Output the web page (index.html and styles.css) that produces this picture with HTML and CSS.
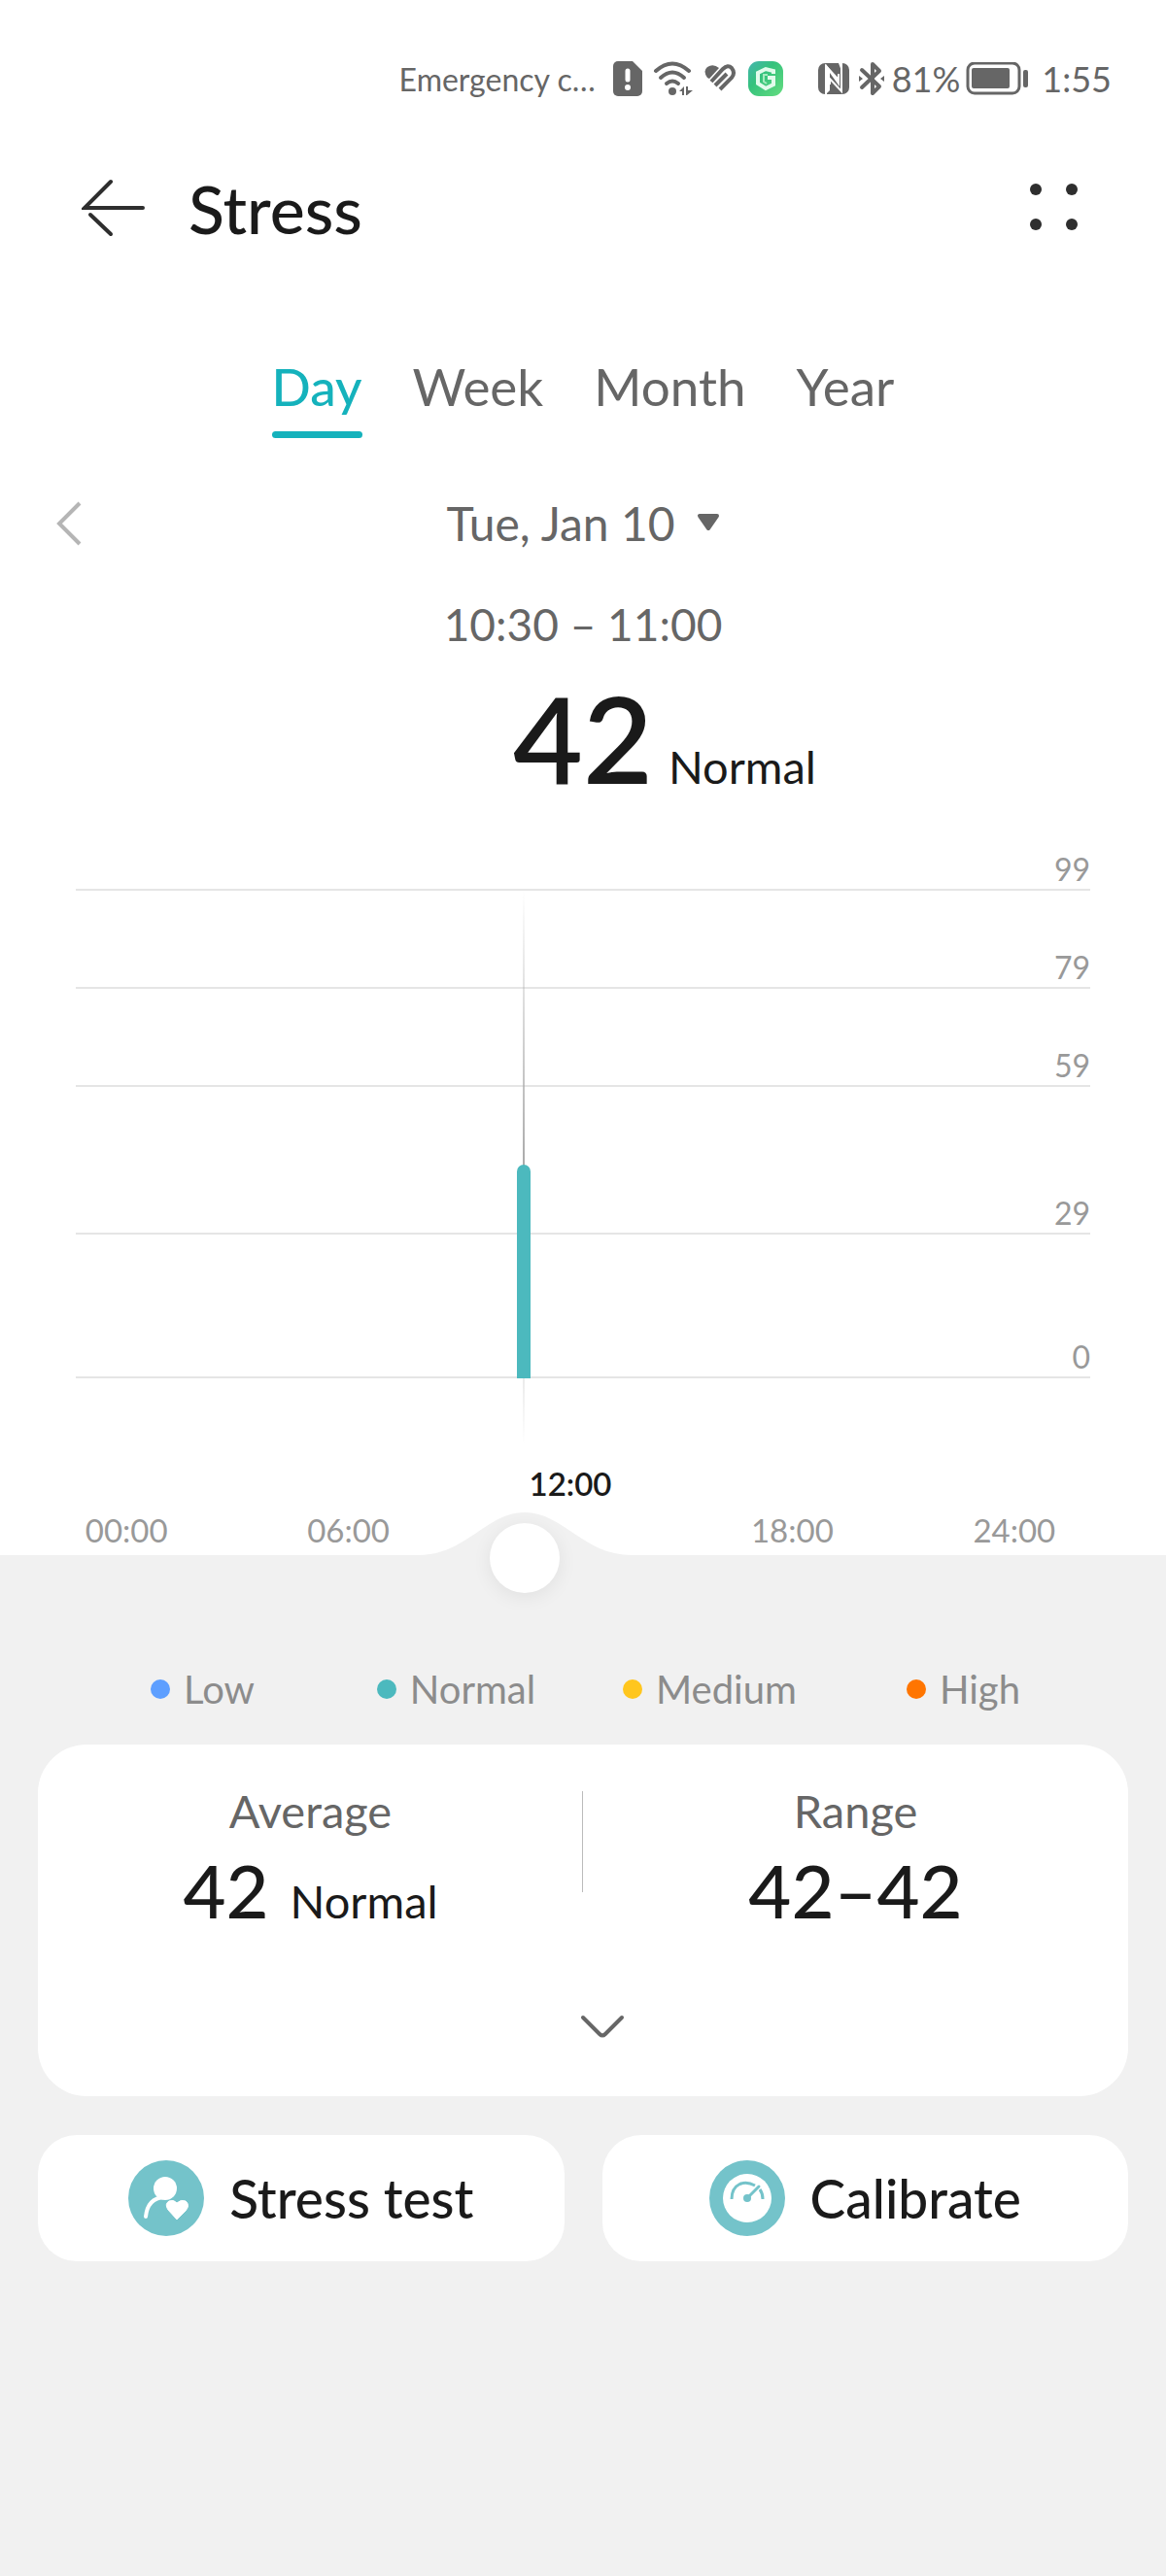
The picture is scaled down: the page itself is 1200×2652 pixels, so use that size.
FILE: index.html
```html
<!DOCTYPE html>
<html lang="en">

<head>
    <meta charset="utf-8">
    <meta name="viewport" content="width=device-width, initial-scale=1.0">
    <title>Stress</title>
    <link rel="stylesheet" href="styles.css">
</head>

<body>

    <div class="top">

        <!-- status bar -->
        <div class="status">
            <span class="carrier">Emergency c…</span>
            <svg class="sim" width="30" height="36" viewBox="0 0 30 36">
                <path d="M5 0h15l10 10v21a5 5 0 0 1-5 5H5a5 5 0 0 1-5-5V5a5 5 0 0 1 5-5z" fill="#666" />
                <path d="M15 10v9" stroke="#fff" stroke-width="5" stroke-linecap="round" />
                <circle cx="15" cy="27" r="3" fill="#fff" />
            </svg>
            <svg class="wifi" width="42" height="36" viewBox="0 0 42 36">
                <g fill="none" stroke="#666" stroke-width="4" stroke-linecap="round">
                    <path d="M3 10Q20-5 37 10" />
                    <path d="M8 17Q20 6 32 17" />
                    <path d="M14 23Q20 18 26 23" />
                </g>
                <circle cx="20" cy="31" r="4" fill="#666" />
                <path d="M27 31l5-5v9h-2v-4zM34 26h2v4h5l-6 5h-1z" fill="#666" />
            </svg>
            <svg class="heart" width="34" height="30" viewBox="0 0 34 30">
                <g fill="none" stroke="#666" stroke-width="4">
                    <path d="M7 18L19 5Q24 0 28 4Q32 9 28 14L16 26" />
                    <path d="M11 22L23 10" />
                </g>
                <path d="M3 14Q-2 7 3 3Q9-1 15 4L5 15z" fill="#666" />
            </svg>
            <svg class="app" width="36" height="36" viewBox="0 0 36 36">
                <defs>
                    <linearGradient id="green" x1="0" y1="0" x2="1" y2="1">
                        <stop offset="0" stop-color="#45b5b0" />
                        <stop offset="0.4" stop-color="#35c27c" />
                        <stop offset="1" stop-color="#65dd80" />
                    </linearGradient>
                </defs>
                <rect width="36" height="36" rx="11" fill="url(#green)" />
                <path d="M26 13V10L18 8L10 12V23L18 28L26 24V17H20" fill="none" stroke="#e2fbec" stroke-width="4" />
                <path d="M20 14h-4v7l3 2" fill="none" stroke="#a5ebc0" stroke-width="2" />
            </svg>
            <svg class="nfc" width="32" height="32" viewBox="0 0 32 32">
                <rect width="32" height="32" rx="7" fill="#666" />
                <path d="M8 32V3L21 17V11M24 0V29L12 16V22" fill="none" stroke="#fff" stroke-width="2" />
                <path d="M8 1L22 19V24L12 10V28L8 32zM21 0h3v8z" fill="#fff" />
            </svg>
            <svg class="bluetooth" width="26" height="36" viewBox="0 0 26 36">
                <path d="M3 9L21 26L14 33V3L21 10L3 27" fill="none" stroke="#666" stroke-width="4" stroke-linejoin="round" stroke-linecap="round" />
                <path d="M0 15l4 3-4 3zM26 15l-4 3 4 3z" fill="#666" />
            </svg>
            <span class="clock">81%</span>
            <svg class="battery" width="64" height="34" viewBox="0 0 64 34">
                <rect x="2" y="1" width="53" height="31" rx="7" fill="none" stroke="#666" stroke-width="3" />
                <rect x="6" y="6" width="39" height="21" rx="2" fill="#666" />
                <rect x="59" y="8" width="5" height="18" rx="2" fill="#666" />
            </svg>
            <span class="clock">1:55</span>
        </div>

        <header class="header">
            <button class="icon-button" aria-label="Back">
                <svg width="66" height="60" viewBox="0 0 66 60" fill="none" stroke="#2e2e2e" stroke-width="4" stroke-linecap="round">
                    <path d="M30 3L3 30H63" />
                    <path d="M9 37L30 57" />
                </svg>
            </button>
            <h1>Stress</h1>
            <button class="icon-button" aria-label="More">
                <svg width="50" height="50" viewBox="0 0 50 50" fill="#2e2e2e">
                    <circle cx="6" cy="6" r="6" />
                    <circle cx="43" cy="6" r="6" />
                    <circle cx="6" cy="42" r="6" />
                    <circle cx="43" cy="42" r="6" />
                </svg>
            </button>
        </header>

        <nav class="tabs">
            <a class="tab active" href="#day">Day</a>
            <a class="tab" href="#week">Week</a>
            <a class="tab" href="#month">Month</a>
            <a class="tab" href="#year">Year</a>
        </nav>

        <div class="date-row">
            <button class="icon-button" aria-label="Previous day">
                <svg width="26" height="46" viewBox="0 0 26 46" fill="none" stroke="#b5b5b5" stroke-width="4">
                    <path d="M24 2L3 23L24 44" />
                </svg>
            </button>
            <button class="date">
                Tue, Jan 10
                <svg width="24" height="22" viewBox="0 0 24 22">
                    <path d="M3 3H21L12 16z" fill="#666" stroke="#666" stroke-width="4" stroke-linejoin="round" />
                </svg>
            </button>
        </div>

        <p class="time">10:30 – 11:00</p>
        <p class="reading"><strong>42</strong><span>Normal</span></p>

        <!-- chart: one grid band per level, heights follow the values -->
        <div class="chart">
            <div class="level top-level">99</div>
            <div class="level">79</div>
            <div class="level">59</div>
            <div class="level tall">29</div>
            <div class="level last">0</div>
            <div class="cursor"></div>
            <div class="bar"></div>
        </div>

        <div class="hours">
            <span>00:00</span>
            <span>06:00</span>
            <span class="current">12:00</span>
            <span>18:00</span>
            <span>24:00</span>
            <svg class="hump" width="220" height="45" viewBox="0 0 220 45">
                <path d="M0 45C50 45 70 1 110 1S170 45 220 45z" fill="#f1f1f1" />
            </svg>
            <button class="knob" aria-label="Selected time"></button>
        </div>
    </div>

    <main>
        <ul class="legend">
            <li><i class="dot low"></i>Low</li>
            <li><i class="dot normal"></i>Normal</li>
            <li><i class="dot medium"></i>Medium</li>
            <li><i class="dot high"></i>High</li>
        </ul>

        <section class="card">
            <div class="stats">
                <div class="stat">
                    <h2>Average</h2>
                    <p><strong>42</strong><span>Normal</span></p>
                </div>
                <div class="stat">
                    <h2>Range</h2>
                    <p><strong>42–42</strong></p>
                </div>
            </div>
            <button class="icon-button expand" aria-label="Show more">
                <svg width="46" height="26" viewBox="0 0 46 26" fill="none" stroke="#666" stroke-width="4" stroke-linecap="round" stroke-linejoin="round">
                    <path d="M3 3L20 20Q23 23 26 20L43 3" />
                </svg>
            </button>
        </section>

        <div class="actions">
            <button class="action">
                <svg width="78" height="78" viewBox="0 0 78 78">
                    <circle cx="39" cy="39" r="39" fill="#74c3ca" />
                    <circle cx="38" cy="29" r="12" fill="#fff" />
                    <path d="M18 58Q20 39 37 38" fill="none" stroke="#fff" stroke-width="4" stroke-linecap="round" />
                    <path d="M50 61L41 51Q37 45 42 42Q47 40 50 44Q54 40 59 42Q64 46 59 52z" fill="#fff" stroke="#fff" stroke-linejoin="round" />
                </svg>
                Stress test
            </button>
            <button class="action">
                <svg width="78" height="78" viewBox="0 0 78 78">
                    <circle cx="39" cy="39" r="39" fill="#74c3ca" />
                    <circle cx="39" cy="39" r="25" fill="#fff" />
                    <g fill="none" stroke="#74c3ca" stroke-width="3">
                        <path d="M23 40C23 24 36 20 47 26" />
                        <path d="M52 30Q55 34 55 40" />
                        <path d="M39 39L51 27" stroke-linecap="round" />
                    </g>
                    <circle cx="39" cy="39" r="4" fill="#74c3ca" />
                </svg>
                Calibrate
            </button>
        </div>
    </main>

</body>

</html>
```
FILE: styles.css
```css
* {
    box-sizing: border-box;
}

body {
    margin: 0;
    background-color: #f1f1f1;
    font-family: Lato, "Open Sans", sans-serif;
    font-size: 47px;
    color: #666;
}

h1,
h2,
p,
ul {
    margin: 0;
    padding: 0;
    font-weight: 400;
}

button {
    border: none;
    padding: 0;
    background: none;
    font: inherit;
    color: inherit;
}

svg {
    display: block;
    flex: none;
}

.top {
    background-color: #fff;
}

/* ---------- status bar ---------- */

.status {
    display: flex;
    justify-content: flex-end;
    align-items: center;
    height: 120px;
    padding: 42px 56px 0 0;
}

.carrier {
    font-size: 32px;
    margin-right: 18px;
}

.clock {
    font-size: 36px;
}

.sim,
.wifi,
.heart {
    margin-right: 11px;
}

.app {
    margin-right: 36px;
}

.nfc {
    margin-right: 10px;
}

.bluetooth {
    margin-right: 8px;
}

.battery {
    margin: 0 14px 0 6px;
}

/* ---------- header ---------- */

.header {
    display: flex;
    align-items: center;
    height: 188px;
    padding: 0 90px 0 84px;
}

.header h1 {
    flex: 1;
    margin-left: 44px;
    font-size: 68px;
    font-weight: 500;
    color: #1a1a1a;
}

.tabs {
    display: flex;
    justify-content: center;
    gap: 52px;
    padding-top: 56px;
}

.tab {
    height: 87px;
    font-size: 53px;
    line-height: 68px;
    color: #666;
    text-decoration: none;
}

.tab.active {
    color: #15b2bc;
    font-weight: 500;
}

.tab.active::after {
    content: "";
    display: block;
    height: 7px;
    margin-top: 12px;
    border-radius: 4px;
    background-color: #15b2bc;
}

/* ---------- selected day ---------- */

.date-row {
    display: grid;
    grid-template-columns: 1fr auto 1fr;
    align-items: center;
    padding: 58px 58px 0;
    line-height: 60px;
}

.date {
    display: flex;
    align-items: center;
    gap: 22px;
    font-size: 48px;
}

.time {
    padding-top: 44px;
    font-size: 46px;
    line-height: 60px;
    text-align: center;
}

.reading {
    display: flex;
    justify-content: center;
    align-items: baseline;
    gap: 16px;
    padding: 14px 0 0 168px;
    line-height: 60px;
    color: #1a1a1a;
}

.reading strong {
    font-size: 124px;
    font-weight: 600;
    line-height: 144px;
}

/* ---------- chart ---------- */

.chart {
    position: relative;
    margin: 0 78px;
    padding: 30px 0 68px;
    font-size: 32px;
    line-height: 40px;
    text-align: right;
    color: #999;
}

.level {
    display: flex;
    justify-content: flex-end;
    align-items: flex-end;
    height: 101px;
    border-bottom: 2px solid #e5e5e5;
}

.level.top-level {
    height: 56px;
}

.level.tall {
    height: 152px;
}

.level.last {
    height: 148px;
}

.cursor {
    position: absolute;
    left: 44%;
    top: 86px;
    bottom: 0;
    width: 2px;
    margin-left: 1px;
    background: linear-gradient(rgba(170, 170, 170, 0), #aaa 50%, rgba(170, 170, 170, 0));
}

.bar {
    position: absolute;
    left: 44%;
    bottom: 68px;
    width: 14px;
    height: 220px;
    margin-left: -5px;
    border-radius: 7px 7px 0 0;
    background-color: #4cb9be;
}

.hours {
    position: relative;
    display: grid;
    grid-template-columns: repeat(5, 1fr);
    align-items: end;
    height: 114px;
    padding: 0 42px 6px 16px;
    font-size: 33px;
    line-height: 40px;
    text-align: center;
    color: #999;
}

.hours .current {
    padding-bottom: 48px;
    font-weight: 600;
    color: #1a1a1a;
}

.hump {
    position: absolute;
    left: 45%;
    bottom: 0;
    margin-left: -110px;
}

.knob {
    position: absolute;
    left: 45%;
    bottom: -39px;
    width: 72px;
    height: 72px;
    margin-left: -36px;
    border-radius: 50%;
    background-color: #fff;
    box-shadow: 0 4px 20px rgba(0, 0, 0, 0.07);
}

/* ---------- lower part ---------- */

main {
    padding: 110px 39px;
}

.legend {
    display: grid;
    grid-template-columns: repeat(4, 1fr);
    margin: 0 39px;
    font-size: 40px;
    line-height: 56px;
    color: #8c8c8c;
    list-style: none;
}

.legend li {
    display: flex;
    justify-content: center;
    align-items: center;
    gap: 14px;
}

.dot {
    width: 20px;
    height: 20px;
    border-radius: 50%;
}

.dot.low {
    background-color: #5e9fff;
}

.dot.normal {
    background-color: #4cb9be;
}

.dot.medium {
    background-color: #ffc61e;
}

.dot.high {
    background-color: #ff7500;
}

.card {
    margin-top: 29px;
    padding: 38px 0 58px;
    border-radius: 50px;
    background-color: #fff;
}

.stats {
    display: grid;
    grid-template-columns: 1fr 1fr;
    position: relative;
}

.stats::after {
    content: "";
    position: absolute;
    left: 50%;
    top: 10px;
    width: 1px;
    height: 104px;
    margin-left: -1px;
    background-color: #bbb;
}

.stat {
    text-align: center;
}

.stat h2 {
    font-size: 47px;
    line-height: 60px;
}

.stat p {
    display: flex;
    justify-content: center;
    align-items: baseline;
    gap: 22px;
    line-height: 60px;
    color: #1a1a1a;
}

.stat strong {
    font-size: 76px;
    font-weight: 500;
    line-height: 104px;
}

.expand {
    display: block;
    margin: 76px auto 0;
    padding-left: 39px;
}

.actions {
    display: grid;
    grid-template-columns: 1fr 1fr;
    gap: 39px;
    margin-top: 40px;
}

.action {
    display: flex;
    justify-content: center;
    align-items: center;
    gap: 26px;
    height: 130px;
    border-radius: 40px;
    background-color: #fff;
    font-size: 55px;
    font-weight: 500;
    color: #1a1a1a;
}
```
